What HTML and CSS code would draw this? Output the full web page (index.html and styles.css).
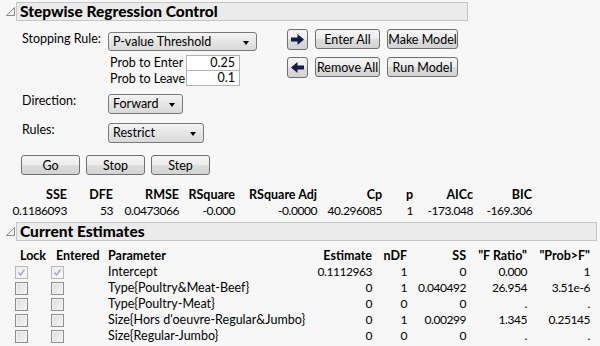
FILE: index.html
```html
<!DOCTYPE html>
<html>
  <head>
    <meta charset="UTF-8" />
    <title>Stepwise Regression Control</title>
    <link rel="stylesheet" href="styles.css">
  </head>
  <body>
    <div class="outline-head head-control">
      <svg class="disclose" width="9" height="9" viewBox="0 0 9 9"><polygon points="0.5,8.5 8.5,0.5 8.5,8.5" /></svg>
      <div class="bar">Stepwise Regression Control</div>
    </div>

    <div class="ctrl">
      <div class="ctrl-left">
        <div class="form-row">
          <span class="lbl">Stopping Rule:</span>
          <div>
            <span class="combo combo-rule">P-value Threshold</span>
            <div class="probs">
              <span class="plbl">Prob to Enter</span><span class="num-box">0.25</span>
              <span class="plbl">Prob to Leave</span><span class="num-box">0.1</span>
            </div>
          </div>
        </div>
        <div class="form-row row-dir">
          <span class="lbl">Direction:</span>
          <span class="combo combo-dir">Forward</span>
        </div>
        <div class="form-row row-rules">
          <span class="lbl">Rules:</span>
          <span class="combo combo-rules">Restrict</span>
        </div>
        <div class="run-btns">
          <button class="btn">Go</button>
          <button class="btn">Stop</button>
          <button class="btn">Step</button>
        </div>
      </div>

      <div class="ctrl-right">
        <button class="btn btn-arrow">
          <svg width="13" height="11" viewBox="0 0 13 11"><path d="M0 3.5h6.5V0L13 5.5 6.5 11V7.5H0z" /></svg>
        </button>
        <button class="btn btn-wide">Enter All</button>
        <button class="btn btn-model">Make Model</button>
        <button class="btn btn-arrow">
          <svg width="13" height="11" viewBox="0 0 13 11"><path d="M13 3.5H6.5V0L0 5.5 6.5 11V7.5H13z" /></svg>
        </button>
        <button class="btn btn-wide">Remove All</button>
        <button class="btn btn-model">Run Model</button>
      </div>
    </div>

    <div class="stats">
      <b>SSE</b><b>DFE</b><b>RMSE</b><b>RSquare</b><b>RSquare Adj</b><b>Cp</b><b>p</b><b>AICc</b><b>BIC</b>
      <span>0.1186093</span><span>53</span><span>0.0473066</span><span>-0.000</span><span>-0.0000</span><span>40.296085</span><span>1</span><span>-173.048</span><span>-169.306</span>
    </div>

    <div class="outline-head head-est">
      <svg class="disclose" width="9" height="9" viewBox="0 0 9 9"><polygon points="0.5,8.5 8.5,0.5 8.5,8.5" /></svg>
      <div class="bar">Current Estimates</div>
    </div>

    <table class="est">
      <thead>
        <tr>
          <th class="c-lock">Lock</th>
          <th class="c-ent">Entered</th>
          <th class="c-param">Parameter</th>
          <th class="c-est">Estimate</th>
          <th class="c-ndf">nDF</th>
          <th class="c-ss">SS</th>
          <th class="c-f">"F Ratio"</th>
          <th class="c-p">"Prob&gt;F"</th>
        </tr>
      </thead>
      <tbody>
        <tr>
          <td class="c-lock"><span class="chk checked"><svg width="9" height="9" viewBox="0 0 9 9"><path d="M1.5 4.5l2 2.5 4-5.5" /></svg></span></td>
          <td class="c-ent"><span class="chk checked"><svg width="9" height="9" viewBox="0 0 9 9"><path d="M1.5 4.5l2 2.5 4-5.5" /></svg></span></td>
          <td class="c-param">Intercept</td>
          <td>0.1112963</td><td>1</td><td>0</td><td>0.000</td><td>1</td>
        </tr>
        <tr>
          <td class="c-lock"><span class="chk"></span></td>
          <td class="c-ent"><span class="chk"></span></td>
          <td class="c-param">Type{Poultry&amp;Meat-Beef}</td>
          <td>0</td><td>1</td><td>0.040492</td><td>26.954</td><td>3.51e-6</td>
        </tr>
        <tr>
          <td class="c-lock"><span class="chk"></span></td>
          <td class="c-ent"><span class="chk"></span></td>
          <td class="c-param">Type{Poultry-Meat}</td>
          <td>0</td><td>0</td><td>0</td><td>.</td><td>.</td>
        </tr>
        <tr>
          <td class="c-lock"><span class="chk"></span></td>
          <td class="c-ent"><span class="chk"></span></td>
          <td class="c-param">Size{Hors d'oeuvre-Regular&amp;Jumbo}</td>
          <td>0</td><td>1</td><td>0.00299</td><td>1.345</td><td>0.25145</td>
        </tr>
        <tr>
          <td class="c-lock"><span class="chk"></span></td>
          <td class="c-ent"><span class="chk"></span></td>
          <td class="c-param">Size{Regular-Jumbo}</td>
          <td>0</td><td>0</td><td>0</td><td>.</td><td>.</td>
        </tr>
      </tbody>
    </table>
  </body>
</html>
```

FILE: styles.css
```css
body {
  margin: 0;
  padding-top: 2px;
  background: #f7f7f7;
  color: #000;
  font-family: Lato, "Liberation Sans", Arial, sans-serif;
  font-size: 12.5px;
  white-space: nowrap;
  width: 600px;
  height: 346px;
  overflow: hidden;
}

/* outline box headers */
.outline-head {
  display: flex;
  align-items: flex-start;
  padding-left: 6px;
}
.disclose {
  margin-top: 5px;
  margin-right: 1px;
  flex: none;
}
.disclose polygon {
  fill: #f4f4f4;
  stroke: #8a8a8a;
  stroke-width: 1;
}
.bar {
  height: 17px;
  line-height: 17px;
  padding-left: 3px;
  background: #ebebeb;
  border: 1px solid #c6c6c6;
  font-size: 15.5px;
  font-weight: 900;
}
.head-control .bar {
  width: 447px;
}
.head-est {
  margin-top: 3px;
}
.head-est .bar {
  width: 576px;
}

/* control panel */
.ctrl {
  display: flex;
  padding: 8px 0 0 22px;
}
.ctrl-left {
  width: 265px;
  flex: none;
  padding-top: 3px;
}
.form-row {
  display: grid;
  grid-template-columns: 86px auto;
  align-items: start;
}
.lbl {
  line-height: 14px;
}
.row-dir {
  margin-top: 8px;
}
.row-rules {
  margin-top: 9px;
}

.combo {
  position: relative;
  display: block;
  box-sizing: border-box;
  height: 20px;
  line-height: 18px;
  padding-left: 4px;
  border: 1px solid #7a7a7a;
  border-radius: 3px;
  background: linear-gradient(#f4f4f4, #e6e6e6 50%, #d9d9d9);
}
.combo::after {
  content: "";
  position: absolute;
  right: 7px;
  top: 8px;
  border-left: 3.5px solid transparent;
  border-right: 3.5px solid transparent;
  border-top: 4px solid #000;
}
.combo-rule {
  width: 149px;
  height: 19px;
  line-height: 17px;
}
.combo-dir {
  width: 75px;
}
.combo-rules {
  width: 96px;
}

.probs {
  display: grid;
  grid-template-columns: 76px 54px;
  margin-top: 4px;
  margin-left: 2px;
}
.plbl {
  line-height: 15px;
  height: 15px;
}
.num-box {
  box-sizing: border-box;
  height: 16px;
  line-height: 14px;
  padding-right: 4px;
  text-align: right;
  background: #fff;
  border: 1px solid #b3b3b3;
}
.num-box + .plbl + .num-box {
  margin-top: -1px;
}

.run-btns {
  display: flex;
  gap: 6px;
  margin: 12px 0 0 -1px;
}

.btn {
  box-sizing: border-box;
  height: 20px;
  padding: 0;
  font-family: inherit;
  font-size: 12.5px;
  white-space: nowrap;
  color: #000;
  border: 1px solid #707070;
  border-radius: 3px;
  background: linear-gradient(#f5f5f5, #ececec 48%, #dddddd 52%, #d3d3d3);
}
.run-btns .btn {
  width: 59px;
}

.ctrl-right {
  display: grid;
  grid-template-columns: 21px 65px 71px;
  grid-auto-rows: 21px;
  column-gap: 7px;
  row-gap: 7px;
  align-items: start;
}
.btn-arrow {
  height: 21px;
  display: flex;
  align-items: center;
  justify-content: center;
}
.btn-arrow path {
  fill: #0f1d4a;
}

/* summary stats */
.stats {
  display: grid;
  grid-template-columns: 67px 46px 66px 56px 82px 65px 31px 60px 59px;
  margin-top: 12px;
  line-height: 16px;
  text-align: right;
}
.stats span {
  font-size: 12px;
  letter-spacing: -0.45px;
}

/* estimates table */
.est {
  table-layout: fixed;
  width: 575px;
  border-collapse: collapse;
  margin-top: 7px;
  margin-left: 15px;
}
.est th,
.est td {
  box-sizing: border-box;
  padding: 0;
  height: 16px;
  line-height: 16px;
  text-align: right;
}
.est td {
  font-size: 12px;
  letter-spacing: -0.45px;
}
.est td.c-param {
  font-size: 12.5px;
  letter-spacing: 0;
}
.est .c-lock,
.est .c-ent,
.est .c-param {
  text-align: left;
}
.est th.c-lock,
.est th.c-ent {
  padding-left: 5px;
}
.c-lock { width: 36px; }
.c-ent { width: 57px; }
.c-param { width: 202px; }
.c-est { width: 62px; }
.c-ndf { width: 35px; }
.c-ss { width: 59px; }
.c-f { width: 61px; }
.c-p { width: 63px; }

.chk {
  display: block;
  box-sizing: border-box;
  width: 13px;
  height: 13px;
  margin-top: 1px;
  border: 1px solid #8e8e8e;
  background: linear-gradient(135deg, #dcdcdc, #f7f7f7);
  box-shadow: inset 0 0 0 1px #f2f2f2;
}
.chk.checked {
  border-color: #b8b8b8;
  background: linear-gradient(135deg, #ececec, #fafafa);
}
.chk svg {
  display: block;
  margin: 1px 0 0 1px;
}
.chk svg path {
  fill: none;
  stroke: #a6acd0;
  stroke-width: 1.6;
}
```
